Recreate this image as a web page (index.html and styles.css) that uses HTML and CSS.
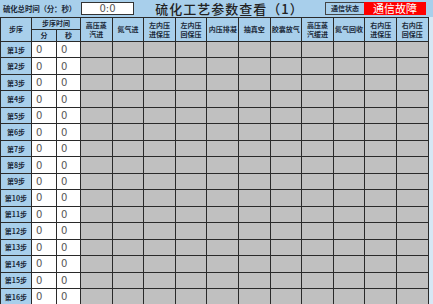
FILE: index.html
```html
<!DOCTYPE html>
<html>
  <head>
    <meta charset="UTF-8">
    <title>硫化工艺参数查看</title>
    <link rel="stylesheet" href="styles.css">
  </head>
  <body>
    <div class="topbar">
      <div class="total-label">硫化总时间（分：秒）</div>
      <div class="total-box">0:0</div>
      <div class="title">硫化工艺参数查看（1）</div>
      <div class="comm-label">通信状态</div>
      <div class="comm-state">通信故障</div>
    </div>
    <table class="params">
      <colgroup>
        <col class="c-step">
        <col class="c-min">
        <col class="c-sec">
        <col span="11" class="c-val">
      </colgroup>
      <thead>
        <tr class="h1">
          <th rowspan="2">步序</th>
          <th colspan="2">步序时间</th>
          <th rowspan="2">高压蒸<br>汽进</th>
          <th rowspan="2">氮气进</th>
          <th rowspan="2">左内压<br>进保压</th>
          <th rowspan="2">左内压<br>回保压</th>
          <th rowspan="2">内压排凝</th>
          <th rowspan="2">抽真空</th>
          <th rowspan="2">胶囊放气</th>
          <th rowspan="2">高压蒸<br>汽缓进</th>
          <th rowspan="2">氮气回收</th>
          <th rowspan="2">右内压<br>进保压</th>
          <th rowspan="2">右内压<br>回保压</th>
        </tr>
        <tr class="h2">
          <th>分</th>
          <th>秒</th>
        </tr>
      </thead>
      <tbody id="rows"></tbody>
    </table>
    <script>
      var body = document.getElementById("rows");
      for (var i = 1; i <= 16; i++) {
        var tr = document.createElement("tr");
        var html = '<th class="step">第' + i + '步</th><td class="num">0</td><td class="num">0</td>';
        for (var j = 0; j < 11; j++) {
          html += '<td class="val"></td>';
        }
        tr.innerHTML = html;
        body.appendChild(tr);
      }
    </script>
  </body>
</html>
```

FILE: styles.css
```css
body {
  margin: 0;
  width: 433px;
  height: 304px;
  overflow: hidden;
  background-color: #d6e8f5;
  font-family: "Noto Sans CJK SC", sans-serif;
  color: #1c2a3a;
}

/* 顶部标题栏 */
.topbar {
  display: flex;
  align-items: center;
  height: 17px;
  background-color: #a8cfeb;
  box-sizing: border-box;
  padding-left: 3px;
}
.total-label {
  width: 78px;
  font-size: 7.5px;
  font-weight: bold;
  letter-spacing: -0.2px;
}
.total-box {
  width: 53px;
  height: 13px;
  box-sizing: border-box;
  border: 1px solid #333;
  background-color: #fff;
  font-family: "DejaVu Sans", sans-serif;
  font-size: 10px;
  line-height: 11px;
  text-align: center;
  color: #555;
}
.title {
  width: 191px;
  text-align: center;
  font-size: 13px;
  font-weight: 500;
  line-height: 15px;
  color: #222;
  letter-spacing: 1px;
}
.comm-label {
  width: 39px;
  height: 13px;
  box-sizing: border-box;
  border: 1px solid #444;
  border-right: none;
  font-size: 7px;
  font-weight: bold;
  line-height: 11px;
  text-align: center;
}
.comm-state {
  width: 62px;
  height: 13px;
  background-color: #ff0000;
  color: #fff;
  font-size: 11px;
  line-height: 13px;
  text-align: center;
}

/* 参数表格 */
.params {
  border-collapse: collapse;
  table-layout: fixed;
  width: 428px;
}
.c-step { width: 31px; }
.c-min { width: 25px; }
.c-sec { width: 24px; }
.c-val { width: 31.6px; }

.params th,
.params td {
  border: 1px solid #2a2a2a;
  padding: 0;
  overflow: hidden;
  white-space: nowrap;
}
.params thead th {
  background-color: #a8cfeb;
  font-size: 7px;
  font-weight: bold;
  line-height: 9px;
  text-align: center;
}
.h1 th { height: 11px; }
.h2 th { height: 11px; }

.params tbody tr { height: 16.47px; }
.step {
  background-color: #a8cfeb;
  font-size: 7px;
  font-weight: bold;
  text-align: center;
}
.num {
  background-color: #fff;
  font-family: "DejaVu Sans", sans-serif;
  font-size: 10px;
  color: #555;
  padding-left: 4px !important;
}
.val {
  background-color: #c0c0c0;
}
```
